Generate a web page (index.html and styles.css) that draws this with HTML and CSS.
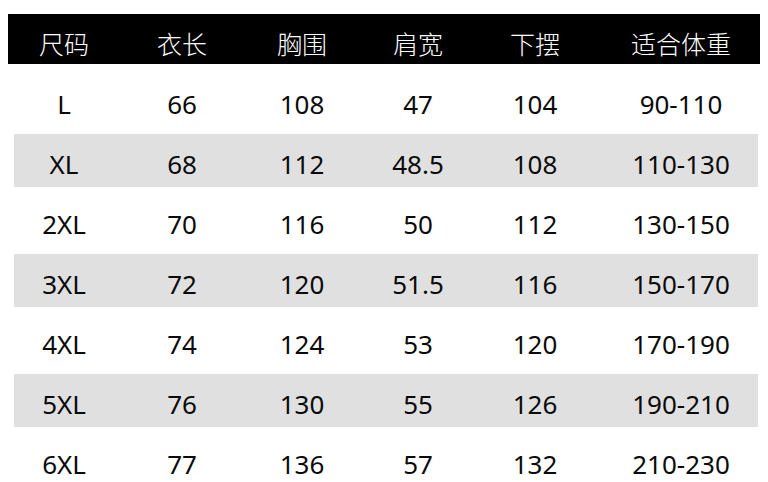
FILE: index.html
```html
<!DOCTYPE html>
<html lang="zh">
<head>
<meta charset="utf-8">
<link rel="stylesheet" href="styles.css">
</head>
<body>
<div class="sheet">
  <div class="head">
    <div class="grid">
      <div class="cell">尺码</div>
      <div class="cell">衣长</div>
      <div class="cell">胸围</div>
      <div class="cell">肩宽</div>
      <div class="cell">下摆</div>
      <div class="cell last">适合体重</div>
    </div>
  </div>
  <div class="body">
    <div class="grid row"><div class="cell">L</div><div class="cell">66</div><div class="cell">108</div><div class="cell">47</div><div class="cell">104</div><div class="cell last">90-110</div></div>
    <div class="grid row alt"><div class="cell">XL</div><div class="cell">68</div><div class="cell">112</div><div class="cell">48.5</div><div class="cell">108</div><div class="cell last">110-130</div></div>
    <div class="grid row"><div class="cell">2XL</div><div class="cell">70</div><div class="cell">116</div><div class="cell">50</div><div class="cell">112</div><div class="cell last">130-150</div></div>
    <div class="grid row alt"><div class="cell">3XL</div><div class="cell">72</div><div class="cell">120</div><div class="cell">51.5</div><div class="cell">116</div><div class="cell last">150-170</div></div>
    <div class="grid row"><div class="cell">4XL</div><div class="cell">74</div><div class="cell">124</div><div class="cell">53</div><div class="cell">120</div><div class="cell last">170-190</div></div>
    <div class="grid row alt"><div class="cell">5XL</div><div class="cell">76</div><div class="cell">130</div><div class="cell">55</div><div class="cell">126</div><div class="cell last">190-210</div></div>
    <div class="grid row"><div class="cell">6XL</div><div class="cell">77</div><div class="cell">136</div><div class="cell">57</div><div class="cell">132</div><div class="cell last">210-230</div></div>
  </div>
</div>
</body>
</html>
```
FILE: styles.css
```css
html, body {
  margin: 0;
  padding: 0;
  background: #ffffff;
}
.sheet {
  width: 768px;
  height: 482px;
  overflow: hidden;
  padding-top: 14px;
  box-sizing: border-box;
  font-family: "Noto Sans", "Noto Sans CJK SC", sans-serif;
  color: #0a0a0a;
}
.grid {
  display: grid;
  grid-template-columns: 100px 136px 104px 128px 106px 170px;
  height: 53px;
}
.cell {
  display: flex;
  align-items: center;
  justify-content: center;
  white-space: nowrap;
}
.cell.last {
  padding-left: 16px;
}
.head {
  margin: 0 8px;
  padding: 0 2px 0 6px;
  background: #000000;
  height: 50px;
  color: #ffffff;
  font-family: "Noto Sans CJK SC", sans-serif;
  font-size: 25px;
  font-weight: 300;
}
.head .grid {
  height: 50px;
  padding-top: 7px;
  box-sizing: border-box;
}
.body {
  display: grid;
  row-gap: 7px;
  padding: 10px 10px 0 14px;
}
.row {
  font-size: 26px;
  font-weight: 400;
  padding-top: 6px;
  box-sizing: border-box;
}
.row.alt {
  background: #e0e0e0;
}
```
